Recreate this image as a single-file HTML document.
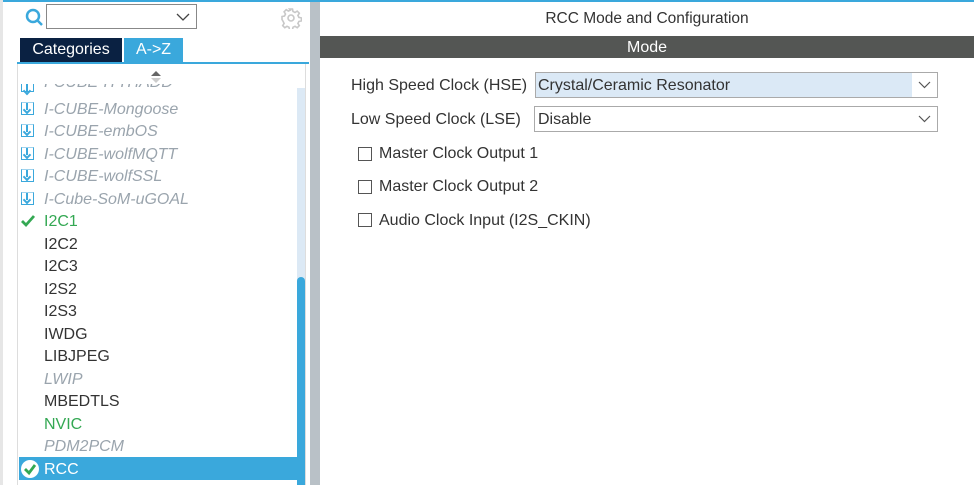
<!DOCTYPE html>
<html><head><style>
body{margin:0;width:974px;height:485px;overflow:hidden;background:#fff;font-family:"Liberation Sans",sans-serif;position:relative}
.a{position:absolute}
.it{position:absolute;left:44px;font-size:16px;line-height:18px;color:#333}
.g{color:#9aa4ad;font-style:italic}
.gr{color:#34a853}
.dl{position:absolute;left:21px;width:13px;height:13px;border:1.5px solid #3aa8dc;border-top-color:#9fd3ee;box-sizing:border-box}
.dl:after{content:"";position:absolute;left:4px;top:0;width:2px;height:7px;background:#3aa8dc}
.dl:before{content:"";position:absolute;left:2px;top:4px;width:4px;height:4px;border-right:2px solid #3aa8dc;border-bottom:2px solid #3aa8dc;transform:rotate(45deg)}
.lbl{position:absolute;font-size:16px;color:#333}
.cb{position:absolute;left:358px;width:12px;height:12px;border:1px solid #555;background:#fff}
</style></head><body>
<div class="a" style="left:0;top:0;width:974px;height:2px;background:#3aa8dc"></div>
<div class="a" style="left:0;top:0;width:3px;height:485px;background:#e6e6e6"></div>
<div class="a" style="left:310px;top:2px;width:10px;height:483px;background:#b9c1c7"></div>
<svg class="a" style="left:25px;top:8px" width="20" height="20"><circle cx="8" cy="8" r="6" fill="none" stroke="#3aa8dc" stroke-width="2.5"/><line x1="12" y1="12" x2="17" y2="17" stroke="#3aa8dc" stroke-width="2.5"/></svg>
<div class="a" style="left:46px;top:4px;width:151px;height:25px;border:1px solid #888;box-sizing:border-box"></div>
<svg class="a" style="left:176px;top:13px" width="14" height="9"><path d="M1 1L7 7L13 1" fill="none" stroke="#444" stroke-width="1.3"/></svg>
<svg class="a" style="left:280px;top:7px" width="22" height="22" viewBox="0 0 22 22"><g fill="none" stroke="#c8c8c8" stroke-width="1.6"><circle cx="11" cy="11" r="3"/><path d="M9.5 2h3l.5 2.5 2 1 2.2-1.4 2.1 2.1-1.4 2.2 1 2 2.5.5v3l-2.5.5-1 2 1.4 2.2-2.1 2.1-2.2-1.4-2 1-.5 2.5h-3l-.5-2.5-2-1-2.2 1.4-2.1-2.1 1.4-2.2-1-2L2 12.5v-3l2.5-.5 1-2L4.1 4.8 6.2 2.7l2.2 1.4 2-1z"/></g></svg>
<div class="a" style="left:20px;top:38px;width:102px;height:24px;background:#0a2142;color:#fff;font-size:16px;text-align:center;line-height:24px">Categories</div>
<div class="a" style="left:124px;top:38px;width:59px;height:24px;background:#3aa8dc;color:#fff;font-size:16px;text-align:center;line-height:24px">A-&gt;Z</div>
<div class="a" style="left:17px;top:62px;width:292px;height:2px;background:#3aa8dc"></div>
<div class="a" style="left:17px;top:64px;width:1px;height:421px;background:#ddd"></div>
<div class="a" style="left:305px;top:64px;width:1px;height:421px;background:#ddd"></div>
<svg class="a" style="left:150px;top:70px" width="12" height="14"><path d="M1 6L6 1L11 6Z" fill="#666"/><path d="M1 8L6 13L11 8Z" fill="#ccc"/></svg>
<div class="a" style="left:297px;top:88px;width:8px;height:397px;background:#dce9f5"></div>
<div class="a" style="left:297px;top:277px;width:8px;height:208px;background:#3aa8dc;border-radius:4px 4px 0 0"></div>
<div class="a" style="left:18px;top:84px;width:279px;height:8px;overflow:hidden"><div class="it g" style="top:-10px;left:26px">I-CUBE-ITTHADD</div></div>
<div class="dl" style="top:84px;height:8px;border-top:none"></div>
<div class="dl" style="top:102px"></div><div class="it g" style="top:101px">I-CUBE-Mongoose</div>
<div class="dl" style="top:124px"></div><div class="it g" style="top:123px">I-CUBE-embOS</div>
<div class="dl" style="top:147px"></div><div class="it g" style="top:146px">I-CUBE-wolfMQTT</div>
<div class="dl" style="top:169px"></div><div class="it g" style="top:168px">I-CUBE-wolfSSL</div>
<div class="dl" style="top:192px"></div><div class="it g" style="top:191px">I-Cube-SoM-uGOAL</div>
<svg class="a" style="left:20px;top:214px" width="16" height="14"><path d="M2 7L6 11L14 2" fill="none" stroke="#34a853" stroke-width="2.8"/></svg>
<div class="it gr" style="top:213px">I2C1</div>
<div class="it" style="top:236px">I2C2</div>
<div class="it" style="top:258px">I2C3</div>
<div class="it" style="top:281px">I2S2</div>
<div class="it" style="top:303px">I2S3</div>
<div class="it" style="top:326px">IWDG</div>
<div class="it" style="top:348px">LIBJPEG</div>
<div class="it g" style="top:371px">LWIP</div>
<div class="it" style="top:393px">MBEDTLS</div>
<div class="it gr" style="top:416px">NVIC</div>
<div class="it g" style="top:438px">PDM2PCM</div>
<div class="a" style="left:19px;top:457px;width:286px;height:23px;background:#3aa8dc"></div>
<svg class="a" style="left:20px;top:459px" width="20" height="20"><circle cx="10" cy="10" r="9" fill="#fff"/><path d="M5 10L9 14L15 6" fill="none" stroke="#34a853" stroke-width="2.8"/></svg>
<div class="it" style="top:461px;color:#fff">RCC</div>
<div class="a" style="left:320px;top:10px;width:654px;text-align:center;font-size:15.5px;color:#333">RCC Mode and Configuration</div>
<div class="a" style="left:320px;top:36px;width:654px;height:22px;background:#545654;color:#fff;font-size:16px;text-align:center;line-height:23px">Mode</div>
<div class="lbl" style="left:351px;top:77px">High Speed Clock (HSE)</div>
<div class="a" style="left:535px;top:72px;width:403px;height:26px;border:1px solid #aaa;box-sizing:border-box;background:linear-gradient(90deg,#dbe9f6 0,#dbe9f6 376px,#fff 376px)"></div>
<div class="lbl" style="left:538px;top:77px">Crystal/Ceramic Resonator</div>
<svg class="a" style="left:918px;top:81px" width="13" height="8"><path d="M1 1L6.5 6.5L12 1" fill="none" stroke="#555" stroke-width="1.2"/></svg>
<div class="lbl" style="left:351px;top:111px">Low Speed Clock (LSE)</div>
<div class="a" style="left:534px;top:106px;width:404px;height:26px;border:1px solid #aaa;box-sizing:border-box"></div>
<div class="lbl" style="left:538px;top:111px">Disable</div>
<svg class="a" style="left:918px;top:115px" width="13" height="8"><path d="M1 1L6.5 6.5L12 1" fill="none" stroke="#555" stroke-width="1.2"/></svg>
<div class="cb" style="top:147px"></div><div class="lbl" style="left:379px;top:145px">Master Clock Output 1</div>
<div class="cb" style="top:180px"></div><div class="lbl" style="left:379px;top:178px">Master Clock Output 2</div>
<div class="cb" style="top:213px"></div><div class="lbl" style="left:379px;top:212px">Audio Clock Input (I2S_CKIN)</div>
</body></html>
